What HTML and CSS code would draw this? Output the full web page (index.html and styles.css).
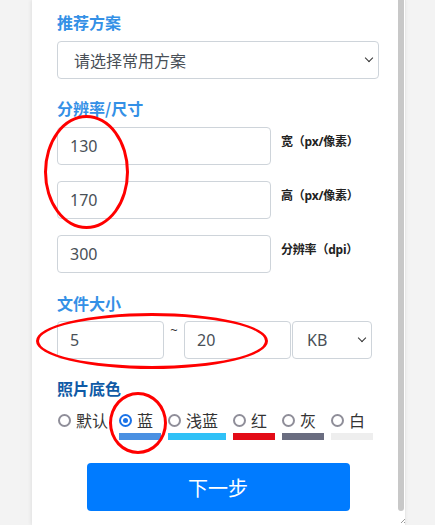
FILE: index.html
```html
<!DOCTYPE html>
<html lang="zh">
<head>
<meta charset="utf-8">
<link rel="stylesheet" href="styles.css">
</head>
<body>
<div class="panel">
  <div class="content">
    <div class="heading">推荐方案</div>
    <div class="select wide">请选择常用方案<span class="chev"></span></div>

    <div class="heading gap">分辨率/尺寸</div>
    <div class="field-row first">
      <div class="input dim">130</div>
      <div class="unit">宽（px/像素）</div>
    </div>
    <div class="field-row">
      <div class="input dim">170</div>
      <div class="unit">高（px/像素）</div>
    </div>
    <div class="field-row">
      <div class="input dim">300</div>
      <div class="unit">分辨率（dpi）</div>
    </div>

    <div class="heading gap2">文件大小</div>
    <div class="size-row">
      <div class="input size">5</div>
      <div class="tilde">~</div>
      <div class="input size2">20</div>
      <div class="select kb">KB<span class="chev"></span></div>
    </div>

    <div class="heading gap3 dark">照片底色</div>
    <div class="colors">
      <div class="color first"><div class="opt"><span class="radio"></span>默认</div></div>
      <div class="color"><div class="opt"><span class="radio on"></span>蓝</div><div class="bar blue"></div></div>
      <div class="color"><div class="opt"><span class="radio"></span>浅蓝</div><div class="bar light"></div></div>
      <div class="color"><div class="opt"><span class="radio"></span>红</div><div class="bar red"></div></div>
      <div class="color"><div class="opt"><span class="radio"></span>灰</div><div class="bar gray"></div></div>
      <div class="color"><div class="opt"><span class="radio"></span>白</div><div class="bar white"></div></div>
    </div>

    <div class="btn-wrap"><div class="btn">下一步</div></div>
  </div>
  <div class="scrollbar"><div class="thumb"></div></div>
</div>
<svg class="grip" width="6" height="6" viewBox="0 0 6 6"><path d="M5 1 L1 5 M5 4 L4 5" stroke="#9a9a9a" stroke-width="1"/></svg>
<div class="mark m1"></div>
<div class="mark m2"></div>
<div class="mark m3"></div>
</body>
</html>
```
FILE: styles.css
```css
* { box-sizing: border-box; }
html, body { margin: 0; padding: 0; }
body {
  background: #f3f3f3;
  width: 435px;
  height: 525px;
  overflow: hidden;
  position: relative;
  font-family: "Noto Sans", "Noto Sans CJK SC", sans-serif;
  color: #333;
}
.panel {
  margin-left: 32px;
  width: 374px;
  height: 525px;
  background: #fff;
  display: flex;
  box-shadow: -1px 0 4px rgba(0,0,0,0.08);
  border-right: 1px solid #e8e8e8;
  overflow: hidden;
}
.content {
  width: 364px;
  flex: none;
  padding: 10px 17px 0 25px;
}
.heading {
  font-family: "Noto Sans CJK SC", sans-serif;
  font-size: 16px;
  line-height: 24px;
  font-weight: 700;
  color: #3490e6;
}
.heading.dark { color: #0f5aa6; }
.heading.gap { margin-top: 17px; }
.heading.gap2 { margin-top: 18px; }
.heading.gap3 { margin-top: 17px; }
.select, .input {
  height: 38px;
  border: 1px solid #ced4da;
  border-radius: 4px;
  display: flex;
  align-items: center;
  font-size: 16px;
  color: #495057;
  background: #fff;
  position: relative;
  flex: none;
}
.select.wide {
  margin-top: 7px;
  width: 322px;
  padding-left: 16px;
  font-family: "Noto Sans CJK SC", sans-serif;
}
.chev {
  position: absolute;
  right: 6px;
  top: 50%;
  width: 6px;
  height: 6px;
  margin-top: -5px;
  border-right: 1.6px solid #333;
  border-bottom: 1.6px solid #333;
  transform: rotate(45deg);
}
.field-row {
  display: flex;
  margin-top: 16px;
}
.field-row.first { margin-top: 7px; }
.input { padding-left: 12px; }
.input.dim { width: 214px; }
.unit {
  margin-left: 10px;
  padding-top: 7px;
  font-size: 12px;
  font-weight: 700;
  color: #222;
  font-family: "Noto Sans", "Noto Sans CJK SC", sans-serif;
  line-height: 16px;
  letter-spacing: -0.2px;
  white-space: nowrap;
}
.size-row {
  display: flex;
  margin-top: 6px;
}
.input.size { width: 107px; }
.tilde {
  width: 20px;
  flex: none;
  text-align: center;
  font-size: 13px;
  line-height: 14px;
  padding-top: 2px;
  color: #333;
}
.input.size2 { width: 107px; }
.select.kb {
  margin-left: 1px;
  width: 80px;
  padding-left: 14px;
}
.colors {
  display: flex;
  margin-top: 10px;
  align-items: flex-start;
}
.color {
  margin-right: 7px;
  display: flex;
  flex-direction: column;
  flex: none;
}
.color.first { margin-right: 11px; margin-left: 1px; }
.opt {
  display: flex;
  align-items: center;
  font-family: "Noto Sans CJK SC", sans-serif;
  font-size: 16px;
  line-height: 20px;
  color: #333;
  padding-right: 8px;
  white-space: nowrap;
}
.color.first .opt { padding-right: 0; }
.radio {
  width: 13px;
  height: 13px;
  border: 2px solid #8f8e99;
  border-radius: 50%;
  margin-right: 5px;
  position: relative;
  flex: none;
}
.radio.on { border-color: #1a73e8; }
.radio.on::after {
  content: "";
  position: absolute;
  left: 2px;
  top: 2px;
  width: 5px;
  height: 5px;
  border-radius: 50%;
  background: #1a73e8;
}
.bar { height: 7px; margin-top: 3px; }
.bar.blue { background: #4a90e2; }
.bar.light { background: #2fc1f7; }
.bar.red { background: #e30b17; }
.bar.gray { background: #6a6d80; }
.bar.white { background: #eeeeee; }
.btn-wrap {
  display: flex;
  justify-content: center;
  margin-top: 23px;
}
.btn {
  width: 263px;
  height: 48px;
  background: #007bff;
  border-radius: 4px;
  color: #fff;
  display: flex;
  align-items: center;
  justify-content: center;
  font-family: "Noto Sans CJK SC", sans-serif;
  font-size: 20px;
}
.scrollbar {
  width: 10px;
  flex: none;
  padding-left: 2px;
}
.thumb {
  width: 6px;
  height: 511px;
  background: #c8c8c8;
  border-radius: 0 0 3px 3px;
}
.grip { position: absolute; left: 400px; top: 518px; }
.mark {
  position: absolute;
  border: 3.5px solid #f00;
  border-radius: 50%;
}
.m1 { left: 44px; top: 115px; width: 85px; height: 114px; }
.m2 { left: 36px; top: 313px; width: 232px; height: 56px; }
.m3 { left: 109px; top: 392px; width: 58px; height: 62px; }
```
